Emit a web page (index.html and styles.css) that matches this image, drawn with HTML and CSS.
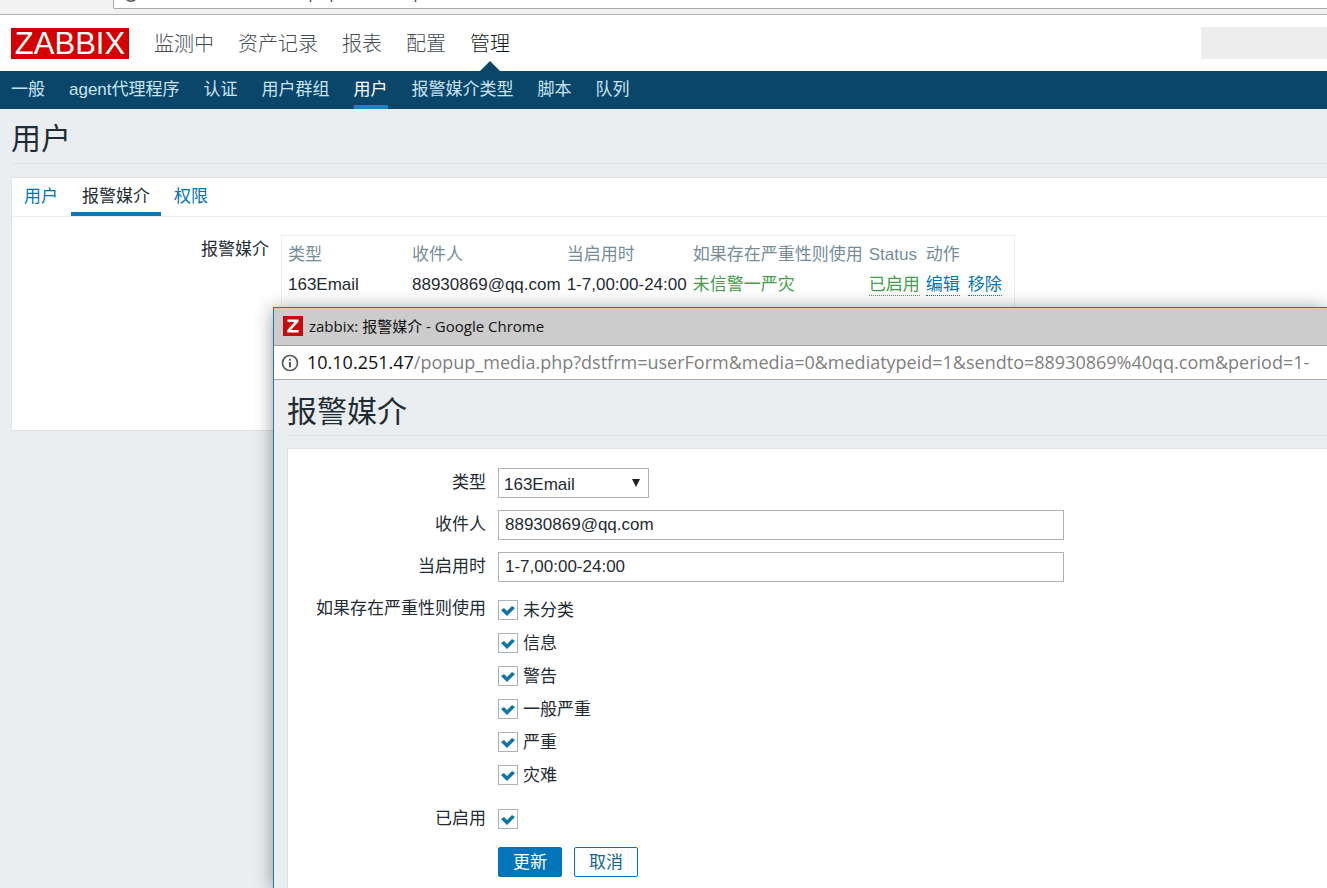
FILE: index.html
```
<!DOCTYPE html>
<html lang="zh-CN">
<head>
<meta charset="utf-8">
<title>用户</title>
<link rel="stylesheet" href="styles.css">
</head>
<body>
<div class="browser-strip">
  <div class="browser-address">
    <svg class="address-tails" width="320" height="8" viewBox="0 0 320 8" fill="none" stroke="#555" aria-hidden="true">
      <path d="M12 -1 Q17 3.500 22 -1" stroke-width="1.500"/>
      <path d="M196.500 0v2M217.500 0v2M301.500 0v2" stroke-width="1.500"/>
    </svg>
  </div>
</div>
<header class="header">
  <a class="logo" href="#">ZABBIX</a>
  <nav class="main-nav">
    <a href="#">监测中</a>
    <a href="#">资产记录</a>
    <a href="#">报表</a>
    <a href="#">配置</a>
    <a class="selected" href="#">管理</a>
  </nav>
  <div class="header-block"></div>
</header>
<nav class="sub-nav">
  <a href="#">一般</a>
  <a href="#">agent代理程序</a>
  <a href="#">认证</a>
  <a href="#">用户群组</a>
  <a class="selected" href="#">用户</a>
  <a href="#">报警媒介类型</a>
  <a href="#">脚本</a>
  <a href="#">队列</a>
</nav>
<main class="page">
  <h1 class="page-title">用户</h1>
  <section class="panel">
    <div class="tabs">
      <a href="#">用户</a>
      <a class="active" href="#">报警媒介</a>
      <a href="#">权限</a>
    </div>
    <div class="media-row">
      <div class="media-label">报警媒介</div>
      <div class="media-box">
        <table class="media-table">
          <thead>
            <tr><th class="col-type">类型</th><th>收件人</th><th>当启用时</th><th>如果存在严重性则使用</th><th>Status</th><th>动作</th></tr>
          </thead>
          <tbody>
            <tr>
              <td>163Email</td>
              <td>88930869@qq.com</td>
              <td>1-7,00:00-24:00</td>
              <td class="severities">未信警一严灾</td>
              <td><a class="link enabled" href="#">已启用</a></td>
              <td><div class="actions"><a class="link" href="#">编辑</a><a class="link" href="#">移除</a></div></td>
            </tr>
          </tbody>
        </table>
      </div>
    </div>
  </section>
</main>

<div class="popup">
  <div class="popup-titlebar">
    <svg width="20" height="20" viewBox="0 0 20 20" aria-hidden="true">
      <rect width="20" height="20" fill="#c80a0e"/>
      <path d="M4.500 3.500h11v2.300L8 14h7.600V16.500H4.200v-2.300L11.600 6H4.500z" fill="#fff"/>
    </svg>
    <span>zabbix: 报警媒介 - Google Chrome</span>
  </div>
  <div class="popup-address">
    <svg width="18" height="18" viewBox="0 0 18 18" aria-hidden="true">
      <circle cx="9" cy="9" r="7.500" fill="none" stroke="#5a5a5a" stroke-width="1.700"/>
      <path d="M8 4.800h2v2H8zM8 8h2v5.200H8z" fill="#5a5a5a"/>
    </svg>
    <div class="url"><span class="host">10.10.251.47</span>/popup_media.php?dstfrm=userForm&amp;media=0&amp;mediatypeid=1&amp;sendto=88930869%40qq.com&amp;period=1-</div>
  </div>
  <div class="popup-body">
    <h2 class="page-title">报警媒介</h2>
    <form class="form">
      <label for="type">类型</label>
      <div class="select-wrap"><select id="type"><option>163Email</option></select></div>
      <label for="sendto">收件人</label>
      <input class="text" id="sendto" type="text" value="88930869@qq.com">
      <label for="period">当启用时</label>
      <input class="text" id="period" type="text" value="1-7,00:00-24:00">
      <div class="form-label" id="sev">如果存在严重性则使用</div>
      <div class="checks" role="group" aria-labelledby="sev">
        <label><input type="checkbox" checked>未分类</label>
        <label><input type="checkbox" checked>信息</label>
        <label><input type="checkbox" checked>警告</label>
        <label><input type="checkbox" checked>一般严重</label>
        <label><input type="checkbox" checked>严重</label>
        <label><input type="checkbox" checked>灾难</label>
      </div>
      <label for="enabled">已启用</label>
      <div class="single-check"><input id="enabled" type="checkbox" checked></div>
      <div class="buttons">
        <button class="primary" type="button">更新</button>
        <button type="button">取消</button>
      </div>
    </form>
  </div>
</div>
</body>
</html>
```
FILE: styles.css
```
* {
  box-sizing: border-box;
}

body {
  position: relative;
  margin: 0;
  min-height: 100vh;
  overflow-x: hidden;
  background: #ebeef0;
  color: #1f2c33;
  font: 17px/30px "Liberation Sans", "Noto Sans CJK SC", sans-serif;
}

a {
  color: #0275b8;
  text-decoration: none;
}

/* Browser edge */
.browser-strip {
  height: 15px;
  padding-left: 113px;
  background: #f1f1f1;
  border-bottom: 1px solid #b0b0b0;
}

.browser-address {
  height: 9px;
  background: #fff;
  border: 1px solid #a8a8a8;
  border-width: 0 0 1px 1px;
  border-radius: 0 0 0 2px;
}

.address-tails {
  display: block;
}

/* Header */
.header {
  display: flex;
  align-items: center;
  height: 56px;
  padding-left: 11px;
  background: #fff;
}

.logo {
  width: 118px;
  height: 31px;
  background: #d40000;
  color: #fff;
  font-size: 31px;
  line-height: 32px;
  text-align: center;
}

.main-nav {
  display: flex;
  align-self: stretch;
  gap: 24px;
  margin-left: 25px;
  font-size: 20px;
  line-height: 58px;
}

.main-nav a {
  position: relative;
  color: #454c52;
  font-weight: 300;
}

.main-nav .selected {
  color: #0f1a20;
}

.main-nav .selected::after {
  content: "";
  position: absolute;
  left: 50%;
  bottom: 0;
  margin-left: -10px;
  border: 10px solid transparent;
  border-top: 0;
  border-bottom-color: #0a466a;
}

.header-block {
  width: 126px;
  height: 32px;
  margin-left: auto;
  background: #ededed;
}

.sub-nav {
  display: flex;
  gap: 24px;
  height: 38px;
  padding-left: 11px;
  background: #0a466a;
  line-height: 38px;
}

.sub-nav a {
  color: #c8e4f5;
}

.sub-nav .selected {
  color: #fff;
  border-bottom: 4px solid #1487cb;
}

/* Page */
.page {
  padding: 0 0 0 11px;
}

.page-title {
  height: 55px;
  margin: 0 0 13px;
  padding: 15px 0 0;
  border-bottom: 1px solid #dfe4e7;
  font-size: 30px;
  font-weight: 400;
  line-height: 30px;
}

.panel {
  background: #fff;
  border: 1px solid #dfe4e7;
  border-right: 0;
}

.tabs {
  display: flex;
  gap: 2px;
  height: 39px;
  padding-left: 1px;
  border-bottom: 1px solid #ebeef0;
  line-height: 38px;
}

.tabs a {
  padding: 0 11px;
}

.tabs .active {
  color: #1f2c33;
  border-bottom: 4px solid #0f75b5;
}

.media-row {
  display: grid;
  grid-template-columns: 257px auto;
  justify-content: start;
  gap: 12px;
  padding: 18px 0 54px;
}

.media-label {
  text-align: right;
}

.media-box {
  min-height: 141px;
  padding: 4px 9px 4px 3px;
  border: 1px solid #ebeef0;
}

.media-table {
  border-collapse: collapse;
  white-space: nowrap;
}

.media-table th,
.media-table td {
  padding: 0 3px;
  text-align: left;
  font-weight: 400;
}

.media-table th {
  color: #768d99;
}

.media-table .col-type {
  width: 124px;
}

.media-table .severities {
  color: #429e47;
}

.actions {
  display: flex;
  gap: 8px;
}

.link {
  display: inline-block;
  line-height: 21px;
  border-bottom: 1px dotted #0275b8;
}

.link.enabled {
  color: #429e47;
  border-color: #429e47;
}

/* Popup window */
.popup {
  position: absolute;
  top: 307px;
  left: 273px;
  right: 0;
  bottom: 0;
  display: flex;
  flex-direction: column;
  overflow: hidden;
  background: #ebeef0;
  border: 1px solid #2a73a3;
  border-width: 1px 0 0 1px;
  box-shadow: 0 2px 18px rgba(0, 0, 0, 0.4);
}

.popup-titlebar {
  display: flex;
  flex: none;
  align-items: center;
  gap: 6px;
  height: 38px;
  padding: 0 0 2px 9px;
  background: #ccc;
  border-bottom: 1px solid #a0a0a0;
  color: #111;
  font-family: "Open Sans", "Noto Sans CJK SC", sans-serif;
  font-size: 15px;
}

.popup-address {
  display: flex;
  flex: none;
  align-items: center;
  gap: 8px;
  height: 34px;
  padding-left: 7px;
  background: #fff;
  border-bottom: 1px solid #a8a8a8;
}

.popup-address svg {
  flex: none;
}

.url {
  padding-bottom: 2px;
  color: #808080;
  font-family: "Open Sans", sans-serif;
  font-size: 18px;
  white-space: nowrap;
}

.url .host {
  color: #111;
}

.popup-body {
  display: flex;
  flex: 1;
  flex-direction: column;
  padding-left: 13px;
}

.popup-body .page-title {
  flex: none;
  height: 56px;
  margin-bottom: 12px;
  padding-top: 17px;
}

.form {
  flex: 1;
  display: grid;
  grid-template-columns: 198px minmax(0, 566px);
  align-content: start;
  gap: 12px;
  padding: 19px 0 10px;
  background: #fff;
  border: 1px solid #dfe4e7;
  border-width: 1px 0 0 1px;
}

.form > label,
.form-label {
  text-align: right;
}

.text,
.select-wrap select {
  width: 100%;
  height: 30px;
  padding: 0 6px;
  background: #fff;
  border: 1px solid #acb3b8;
  border-radius: 0;
  color: #1f2c33;
  font: inherit;
}

.select-wrap {
  position: relative;
  width: 151px;
  height: 30px;
}

.select-wrap select {
  appearance: none;
  padding: 1px 5px 0;
}

.select-wrap::after {
  content: "";
  position: absolute;
  top: 11px;
  right: 9px;
  border: 4px solid transparent;
  border-top: 8px solid #222;
  border-bottom: 0;
  pointer-events: none;
}

.checks label {
  display: flex;
  align-items: center;
  gap: 5px;
  height: 33px;
}

input[type="checkbox"] {
  appearance: none;
  flex: none;
  width: 20px;
  height: 20px;
  margin: 0 0 1px;
  background: #fff;
  border: 1px solid #acb3b8;
}

input[type="checkbox"]:checked::before {
  content: "";
  display: block;
  width: 18px;
  height: 18px;
  background: #0f75a8;
  clip-path: polygon(2px 9px, 5px 7px, 8px 10px, 13px 5px, 16px 7px, 8px 15px);
}

.single-check {
  display: flex;
  align-items: center;
  height: 31px;
}

.buttons {
  grid-column: 2;
  display: flex;
  gap: 12px;
}

.buttons button {
  width: 64px;
  height: 30px;
  padding: 0;
  background: #fff;
  border: 1px solid #0275b8;
  border-radius: 2px;
  color: #0f6491;
  font: inherit;
}

.buttons .primary {
  background: #0275b8;
  color: #fff;
}
```
